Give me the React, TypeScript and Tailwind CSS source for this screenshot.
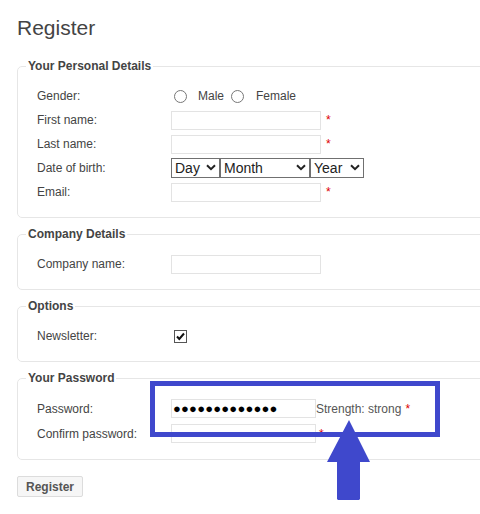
import React from 'react';

const Star = ({ className = '' }: { className?: string }) => (
  <span className={`text-[#d00] ${className}`}>*</span>
);

const Field = ({ w = 'w-[150px]' }: { w?: string }) => (
  <input type="text" className={`${w} h-[19px] border border-[#e3e3e3] bg-white outline-none`} />
);

const Chevron = () => (
  <svg width="10" height="7" viewBox="0 0 10 7" className="pointer-events-none absolute right-[4px] top-[6px]">
    <path d="M1 1.2 L5 5.2 L9 1.2" fill="none" stroke="#222" strokeWidth="2" />
  </svg>
);

const Sel = ({ label, w }: { label: string; w: string }) => (
  <div className="relative">
    <select
      defaultValue=""
      className={`${w} h-5 appearance-none border border-[#707070] bg-white pl-[3px] text-[14px] leading-[18px] text-[#222] outline-none rounded-none`}
    >
      <option value="">{label}</option>
    </select>
    <Chevron />
  </div>
);

const Row = ({ label, children, h = 'h-6' }: { label: string; children?: React.ReactNode; h?: string }) => (
  <div className={`flex items-center ${h}`}>
    <label className="ml-[11px] w-[134px] shrink-0">{label}</label>
    <div className="flex items-center">{children}</div>
  </div>
);

const Box = ({ title, children, className = '' }: { title: string; children: React.ReactNode; className?: string }) => (
  <fieldset className={`w-[470px] rounded-[5px] border border-[#e6e6e6] pl-2 pb-[13px] ${className}`}>
    <legend className="px-0.5 font-bold leading-4 text-[#444]">{title}</legend>
    <div className="pt-[10px]">{children}</div>
  </fieldset>
);

const Radio = ({ className = '' }: { className?: string }) => (
  <span className={`inline-block h-[13px] w-[13px] rounded-full border border-[#777] bg-white ${className}`} />
);

export default function App() {
  return (
    <div className="relative h-[514px] w-[480px] overflow-hidden bg-white pl-[17px] font-['Liberation_Sans',Arial,sans-serif] text-[12px] text-[#444]">
      <h1 className="mt-4 text-[21px] font-normal leading-6 text-[#444]">Register</h1>

      <form onSubmit={(e) => e.preventDefault()}>
        <Box title="Your Personal Details" className="mt-[18px]">
          <Row label="Gender:">
            <Radio className="ml-[3px]" />
            <span className="ml-[11px]">Male</span>
            <Radio className="ml-[7px]" />
            <span className="ml-[12px]">Female</span>
          </Row>
          <Row label="First name:">
            <Field />
            <Star className="ml-[5px]" />
          </Row>
          <Row label="Last name:">
            <Field />
            <Star className="ml-[5px]" />
          </Row>
          <Row label="Date of birth:">
            <Sel label="Day" w="w-[49px]" />
            <Sel label="Month" w="w-[90px]" />
            <Sel label="Year" w="w-[54px]" />
          </Row>
          <Row label="Email:">
            <Field />
            <Star className="ml-[5px]" />
          </Row>
        </Box>

        <Box title="Company Details" className="mt-2">
          <Row label="Company name:">
            <Field />
          </Row>
        </Box>

        <Box title="Options" className="mt-2">
          <Row label="Newsletter:">
            <svg width="13" height="13" viewBox="0 0 13 13" className="ml-[3px]">
              <rect x="0.5" y="0.5" width="12" height="12" fill="#fff" stroke="#555" />
              <path d="M3 6.5 L5.3 9 L10 3.5" fill="none" stroke="#111" strokeWidth="2" />
            </svg>
          </Row>
        </Box>

        <Box title="Your Password" className="mt-2">
          <Row label="Password:" h="h-[25px]">
            <div className="flex h-[19px] w-[145px] items-center border border-[#e3e3e3] bg-white pl-[1px] text-[13px] leading-none tracking-[0.2px] text-black">
              ●●●●●●●●●●●●●
            </div>
            <span className="text-[#555]">Strength: strong</span>
            <Star className="ml-1" />
          </Row>
          <Row label="Confirm password:" h="h-[25px]">
            <Field w="w-[145px]" />
            <Star className="ml-[3px]" />
          </Row>
        </Box>

        <button
          type="submit"
          className="mt-4 h-[21px] rounded-[2px] border border-[#dcdcdc] bg-[#f6f6f6] px-2 font-bold leading-none text-[#555]"
        >
          Register
        </button>
      </form>

      <div className="absolute left-[150px] top-[381px] h-[56px] w-[290px] border-[5px] border-[#3f48cc]" />
      <svg width="43" height="80" viewBox="0 0 43 80" className="absolute left-[327px] top-[420px]">
        <polygon points="22,0 43,42 33,42 33,79 32,80 11,80 10,79 10,42 0,42" fill="#3f48cc" />
      </svg>
    </div>
  );
}
